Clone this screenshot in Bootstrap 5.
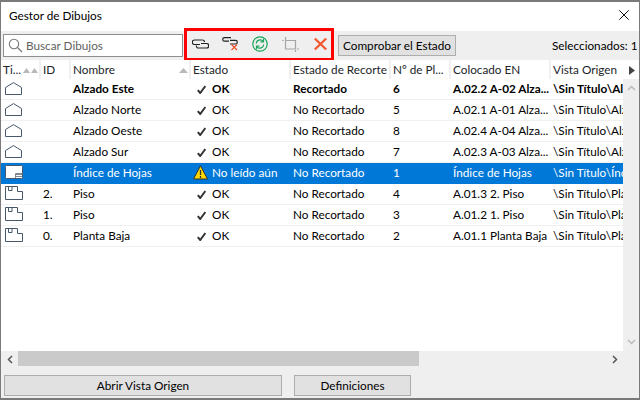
<!DOCTYPE html>
<html lang="es">
<head>
<meta charset="utf-8">
<title>Gestor de Dibujos</title>
<link href="https://cdn.jsdelivr.net/npm/bootstrap@5.3.0/dist/css/bootstrap.min.css" rel="stylesheet">
<style>
html,body{margin:0;height:400px;overflow:hidden;background:#fff}
body{font-family:"Lato","Noto Sans",sans-serif;font-size:11.75px;line-height:16px;color:#000}
.win{width:640px;height:400px;border:1px solid #7a7a7a;border-top-width:2px;border-bottom-width:2px;background:#efefef}
.ttl{height:29px;background:#fff;padding-left:8px;padding-top:6px}
.ttl svg{margin-right:10px;margin-top:2px}
.tbar{height:29px;padding-left:2px}
.srch{width:180px;flex:none;height:23px;border:1px solid #8e8e8e;background:#fff;color:#5f5f5f;padding-left:4px;gap:3px}
.redbox{width:150px;height:33px;border:3px solid #f00;margin:-3px 4px 0 1px;flex:none;gap:4px;background:#efefef}
.tool{width:26px;height:27px;display:flex;align-items:center;justify-content:center;flex:none}
.gbtn{background:#e1e1e1;border:1px solid #adadad;border-radius:0;color:#000;font-size:11.75px;line-height:16px;padding:0;height:21px;text-align:center;white-space:nowrap;flex:none}
.chk{width:118px}
.seltxt{margin-left:96px;white-space:nowrap}
.dtbl{table-layout:fixed;margin:0;border-collapse:separate;border-spacing:0;font-size:11.75px;--bs-table-bg:transparent}
.dtbl th,.dtbl td{padding:0 0 0 2px;white-space:nowrap;overflow:hidden;vertical-align:middle;border:0}
.dtbl th{font-weight:400;height:19px;border-right:2px solid #f0f0f0;background:#fff}
.dtbl th:last-child{border-right:0}
.dtbl td{height:21px;border-bottom:1px solid #f0f0f0;color:#000}
.dtbl tr.bld td{font-weight:700}
.dtbl tr.seld td{background:#0078d7;color:#fff;border-bottom-color:#0078d7}
.dtbl td.ic{padding-left:4px;line-height:0}
.ic svg{margin-bottom:2px}
.dtbl td.est{padding-left:6px}
.dtbl td.est.warn{padding-left:2px}
.est svg{vertical-align:-1px;margin-right:6px}
.warn svg{vertical-align:-3px;margin-right:4px}
.sortw{float:right;margin-top:5px;margin-right:1px}
.nxt{float:right;margin-top:4px;margin-right:4px}
.headt{width:638px}
.bodyt{width:622px}
.midd{height:272px}
.tblwrap{width:622px;background:#fff;height:272px;overflow:hidden;flex:none}
.vbar{width:16px;height:272px;padding:6px 0}
.hbar{height:15px;width:622px}
.hthumb{background:#cacaca;width:401px;height:15px}
.arr{width:17px}
.arrend{padding-right:5px}
.foot{padding:9px 0 0 3px;gap:12px}
.ab{width:278px}
.def{width:117px}
.c1{width:40px}.c2{width:30px}.c3{width:120px}.c4,.c5,.c7{width:100px}.c6{width:60px}.c8h{width:88px}.c8b{width:72px}
</style>
</head>
<body>
<svg width="0" height="0" class="d-block" aria-hidden="true">
  <symbol id="i-house" viewBox="0 0 17 13"><path d="M.5 5.500L8.500 .6l8 4.900v7H.5z" fill="none" stroke="#46586a"/></symbol>
  <symbol id="i-plan" viewBox="0 0 18 14"><path d="M.5.500h12v5h5v8H.5zM3.500 1v3.500h3.500V1" fill="none" stroke="#46586a"/></symbol>
  <symbol id="i-check" viewBox="0 0 9 9"><path d="M.8 5.200L3.200 8 8.400 1" fill="none" stroke="#333" stroke-width="2"/></symbol>
</svg>
<div class="win d-flex flex-column">
  <div class="ttl d-flex justify-content-between align-items-start">
    <span>Gestor de Dibujos</span>
    <svg width="10" height="10" viewBox="0 0 10 10"><path d="M.3.300l9.400 9.400M9.700.300L.3 9.700" stroke="#111" fill="none"/></svg>
  </div>
  <div class="tbar d-flex align-items-center">
    <div class="srch d-flex align-items-center">
      <svg width="15" height="15" viewBox="0 0 15 15"><circle cx="6" cy="6" r="4.700" fill="none" stroke="#777" stroke-width="1.100"/><path d="M9.500 9.500l4.500 4.500" stroke="#777" stroke-width="1.300"/></svg>
      <span>Buscar Dibujos</span>
    </div>
    <div class="redbox d-flex align-items-center">
      <div class="tool"><svg width="17" height="10" viewBox="0 0 17 10" fill="none" stroke="#222" stroke-width="1.200"><path d="M10.500 1H2.500a2 2 0 0 0 0 4.500H8"/><path d="M9 4.500h5.500a2 2 0 0 1 0 4.500H6.500a2 2 0 0 1-2-2.500"/><path d="M10.500 1a2 2 0 0 1 2 2"/></svg></div>
      <div class="tool"><svg width="16" height="14" viewBox="0 0 16 14" fill="none"><path d="M9 .6H2.500a1.800 1.800 0 0 0 0 3.600H7M8 3.400h5.500a1.800 1.800 0 0 1 0 3.600H8" stroke="#222" stroke-width="1.200"/><path d="M9.500 7.500l5.500 5.500M15 7.500L9.500 13" stroke="#f0512a" stroke-width="1.200"/></svg></div>
      <div class="tool"><svg width="16" height="16" viewBox="0 0 16 16" fill="none" stroke="#1aa55a" stroke-width="1.200"><circle cx="8" cy="8" r="7.200"/><path d="M4.300 7.500a3.800 3.800 0 0 1 6.700-2.300M11.700 8.500a3.800 3.800 0 0 1-6.700 2.300"/><path d="M11.500 2.800v3H8.500M4.500 13.200v-3h3"/></svg></div>
      <div class="tool"><svg width="17" height="15" viewBox="0 0 17 15" fill="none" stroke="#a5a5a5" stroke-width="1.200"><path d="M3.500 0v3M0 3.500h1.500M3.500 3.500h10V12H3.500zM13.500 13v2M15 12h2"/></svg></div>
      <div class="tool"><svg width="13" height="12" viewBox="0 0 13 12"><path d="M.8.500l11.400 11M12.200.500L.8 11.500" stroke="#f2562c" stroke-width="2.200"/></svg></div>
    </div>
    <button type="button" class="btn gbtn chk">Comprobar el Estado</button>
    <span class="seltxt">Seleccionados: 1</span>
  </div>
  <table class="table dtbl headt">
    <colgroup><col class="c1"><col class="c2"><col class="c3"><col class="c4"><col class="c5"><col class="c6"><col class="c7"><col class="c8h"></colgroup>
    <thead><tr>
      <th><svg class="sortw" width="15" height="6" viewBox="0 0 15 6" fill="#b9b9b9"><path d="M0 6l3.500-5L7 6zM8 6l3.500-5L15 6z"/></svg>Ti...</th>
      <th>ID</th>
      <th><svg class="sortw" width="9" height="6" viewBox="0 0 9 6" fill="#b9b9b9"><path d="M0 6l4.500-5L9 6z"/></svg>Nombre</th>
      <th>Estado</th><th>Estado de Recorte</th><th>Nº de Pl...</th><th>Colocado EN</th>
      <th><svg class="nxt" width="6" height="9" viewBox="0 0 6 9" fill="#444"><path d="M0 0l6 4.500L0 9z"/></svg>Vista Origen</th>
    </tr></thead>
  </table>
  <div class="midd d-flex">
    <div class="tblwrap">
      <table class="table dtbl bodyt">
        <colgroup><col class="c1"><col class="c2"><col class="c3"><col class="c4"><col class="c5"><col class="c6"><col class="c7"><col class="c8b"></colgroup>
        <tbody>
          <tr class="bld"><td class="ic"><svg width="17" height="13"><use href="#i-house"/></svg></td><td></td><td>Alzado Este</td><td class="est"><svg width="9" height="9"><use href="#i-check"/></svg>OK</td><td>Recortado</td><td>6</td><td>A.02.2 A-02 Alza...</td><td>\Sin Título\Alz</td></tr>
          <tr><td class="ic"><svg width="17" height="13"><use href="#i-house"/></svg></td><td></td><td>Alzado Norte</td><td class="est"><svg width="9" height="9"><use href="#i-check"/></svg>OK</td><td>No Recortado</td><td>5</td><td>A.02.1 A-01 Alza...</td><td>\Sin Título\Alz</td></tr>
          <tr><td class="ic"><svg width="17" height="13"><use href="#i-house"/></svg></td><td></td><td>Alzado Oeste</td><td class="est"><svg width="9" height="9"><use href="#i-check"/></svg>OK</td><td>No Recortado</td><td>8</td><td>A.02.4 A-04 Alza...</td><td>\Sin Título\Alz</td></tr>
          <tr><td class="ic"><svg width="17" height="13"><use href="#i-house"/></svg></td><td></td><td>Alzado Sur</td><td class="est"><svg width="9" height="9"><use href="#i-check"/></svg>OK</td><td>No Recortado</td><td>7</td><td>A.02.3 A-03 Alza...</td><td>\Sin Título\Alz</td></tr>
          <tr class="seld"><td class="ic"><svg width="18" height="14" viewBox="0 0 18 14"><rect x=".5" y=".5" width="17" height="13" rx="1" fill="#fff" stroke="#46586a"/><path d="M11 9.500h6M11 11.500h6" stroke="#7f8a96"/><path d="M10.500 13V8.500h7" fill="none" stroke="#7f8a96"/></svg></td><td></td><td>Índice de Hojas</td><td class="est warn"><svg width="15" height="15" viewBox="0 0 15 15"><path d="M7.500.8L14.500 14H.5z" fill="#ffd800" stroke="#333"/><path d="M7.500 5v5M7.500 11v2" stroke="#333" stroke-width="1.300"/></svg>No leído aún</td><td>No Recortado</td><td>1</td><td>Índice de Hojas</td><td>\Sin Título\Índ</td></tr>
          <tr><td class="ic"><svg width="18" height="14"><use href="#i-plan"/></svg></td><td>2.</td><td>Piso</td><td class="est"><svg width="9" height="9"><use href="#i-check"/></svg>OK</td><td>No Recortado</td><td>4</td><td>A.01.3 2. Piso</td><td>\Sin Título\Pla</td></tr>
          <tr><td class="ic"><svg width="18" height="14"><use href="#i-plan"/></svg></td><td>1.</td><td>Piso</td><td class="est"><svg width="9" height="9"><use href="#i-check"/></svg>OK</td><td>No Recortado</td><td>3</td><td>A.01.2 1. Piso</td><td>\Sin Título\Pla</td></tr>
          <tr><td class="ic"><svg width="18" height="14"><use href="#i-plan"/></svg></td><td>0.</td><td>Planta Baja</td><td class="est"><svg width="9" height="9"><use href="#i-check"/></svg>OK</td><td>No Recortado</td><td>2</td><td>A.01.1 Planta Baja</td><td>\Sin Título\Pla</td></tr>
        </tbody>
      </table>
    </div>
    <div class="vbar d-flex flex-column justify-content-between align-items-center">
      <svg width="9" height="6" viewBox="0 0 9 6"><path d="M1 5l3.500-3.500L8 5" fill="none" stroke="#bbb" stroke-width="1.500"/></svg>
      <svg width="9" height="6" viewBox="0 0 9 6"><path d="M1 1l3.500 3.500L8 1" fill="none" stroke="#bbb" stroke-width="1.500"/></svg>
    </div>
  </div>
  <div class="hbar d-flex align-items-center">
    <div class="arr text-center"><svg width="6" height="9" viewBox="0 0 6 9"><path d="M5 1L1.500 4.500 5 8" fill="none" stroke="#555" stroke-width="1.500"/></svg></div>
    <div class="hthumb"></div>
    <div class="flex-grow-1 text-end arrend"><svg width="6" height="9" viewBox="0 0 6 9"><path d="M1 1l3.500 3.500L1 8" fill="none" stroke="#555" stroke-width="1.500"/></svg></div>
  </div>
  <div class="foot d-flex">
    <button type="button" class="btn gbtn ab">Abrir Vista Origen</button>
    <button type="button" class="btn gbtn def">Definiciones</button>
  </div>
</div>
</body>
</html>
